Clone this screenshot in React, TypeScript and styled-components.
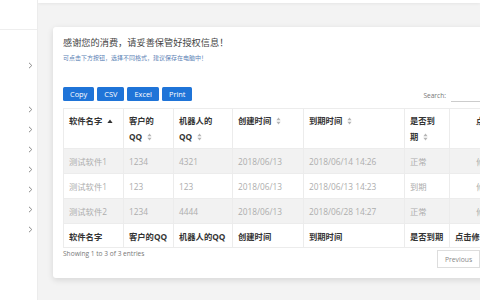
import styled, { createGlobalStyle } from "styled-components";

const GlobalStyle = createGlobalStyle`
    html, body {
        margin: 0;
        padding: 0;
        width: 480px;
        height: 300px;
        overflow: hidden;
        font-family: "Open Sans", "Noto Sans CJK SC", sans-serif;
    }
`;

type Column = {
    lines: string[];
    width: number;
    sort?: "asc" | "both";
    center?: boolean;
    footer: string;
};

const columns: Column[] = [
    { lines: ["软件名字"], width: 60, sort: "asc", footer: "软件名字" },
    { lines: ["客户的", "QQ"], width: 50, sort: "both", footer: "客户的QQ" },
    { lines: ["机器人的", "QQ"], width: 59, sort: "both", footer: "机器人的QQ" },
    { lines: ["创建时间"], width: 71, sort: "both", footer: "创建时间" },
    { lines: ["到期时间"], width: 101, sort: "both", footer: "到期时间" },
    { lines: ["是否到", "期"], width: 45, sort: "both", footer: "是否到期" },
    { lines: ["点击修改"], width: 70, center: true, footer: "点击修改" },
];

const rows = [
    ["测试软件1", "1234", "4321", "2018/06/13", "2018/06/14 14:26", "正常", "修改"],
    ["测试软件1", "123", "123", "2018/06/13", "2018/06/13 14:23", "到期", "修改"],
    ["测试软件2", "1234", "4444", "2018/06/13", "2018/06/28 14:27", "正常", "修改"],
];

// sidebar: true = has a chevron, "gap" = section spacer
const navItems: (boolean | "gap")[] = [true, "gap", true, true, true, true, true, true, true];

export default function App() {
    return (
        <>
            <GlobalStyle />
            <Page>
                <Sidebar>
                    <Logo />
                    <Nav>
                        {navItems.map((item, i) =>
                            item === "gap" ? (
                                <NavGap key={i} />
                            ) : (
                                <NavItem key={i}>
                                    <Chevron />
                                </NavItem>
                            )
                        )}
                    </Nav>
                </Sidebar>

                <Main>
                    <TopBar />
                    <Card>
                        <Title>感谢您的消费，请妥善保管好授权信息！</Title>
                        <Hint>可点击下方按钮，选择不同格式，建议保存在电脑中！</Hint>

                        <Toolbar>
                            <Buttons>
                                <ExportButton>Copy</ExportButton>
                                <ExportButton>CSV</ExportButton>
                                <ExportButton>Excel</ExportButton>
                                <ExportButton>Print</ExportButton>
                            </Buttons>
                            <SearchBox>
                                <label>Search:</label>
                                <input />
                            </SearchBox>
                        </Toolbar>

                        <Table>
                            <colgroup>
                                {columns.map((c, i) => (
                                    <col key={i} style={{ width: c.width }} />
                                ))}
                            </colgroup>
                            <thead>
                                <tr>
                                    {columns.map((c, i) => (
                                        <HeadCell key={i} $center={c.center}>
                                            {c.lines.map((line, j) => (
                                                <HeadLine key={j} $center={c.center}>
                                                    {line}
                                                    {j === c.lines.length - 1 && c.sort && <SortIcon dir={c.sort} />}
                                                </HeadLine>
                                            ))}
                                        </HeadCell>
                                    ))}
                                </tr>
                            </thead>
                            <tbody>
                                {rows.map((row, i) => (
                                    <BodyRow key={i} $striped={i % 2 === 0}>
                                        {row.map((value, j) => (
                                            <BodyCell key={j} $center={columns[j].center}>
                                                {value}
                                            </BodyCell>
                                        ))}
                                    </BodyRow>
                                ))}
                            </tbody>
                            <tfoot>
                                <tr>
                                    {columns.map((c, i) => (
                                        <FootCell key={i}>{c.footer}</FootCell>
                                    ))}
                                </tr>
                            </tfoot>
                        </Table>

                        <TableFooter>
                            <Info>Showing 1 to 3 of 3 entries</Info>
                            <Pagination>
                                <PageButton>Previous</PageButton>
                                <PageButton $active>1</PageButton>
                                <PageButton>Next</PageButton>
                            </Pagination>
                        </TableFooter>
                    </Card>
                </Main>
            </Page>
        </>
    );
}

function Chevron() {
    return (
        <svg width="5" height="7" viewBox="0 0 5 7">
            <polyline points="1,0.8 3.8,3.5 1,6.2" fill="none" stroke="#8a8a8a" strokeWidth="1" />
        </svg>
    );
}

function SortIcon({ dir }: { dir: "asc" | "both" }) {
    if (dir === "asc") {
        return (
            <SortWrap>
                <svg width="6" height="5" viewBox="0 0 6 5">
                    <polygon points="3,0.5 5.6,4 0.4,4" fill="#333" />
                </svg>
            </SortWrap>
        );
    }
    return (
        <SortWrap>
            <svg width="5" height="8" viewBox="0 0 5 8">
                <polygon points="2.5,0.5 4.6,3.2 0.4,3.2" fill="#b5b5b5" />
                <polygon points="2.5,7.5 4.6,4.8 0.4,4.8" fill="#b5b5b5" />
            </svg>
        </SortWrap>
    );
}

// Styled Components

const Page = styled.div`
    display: flex;
    width: 480px;
    height: 300px;
    overflow: hidden;
`;

const Sidebar = styled.div`
    width: 37px;
    flex-shrink: 0;
    background: #fff;
    border-right: 1px solid #ececec;
`;

const Logo = styled.div`
    height: 29px;
    border-bottom: 1px solid #eeeeee;
`;

const Nav = styled.div`
    display: flex;
    flex-direction: column;
    padding-top: 25px;
`;

const NavItem = styled.div`
    height: 20px;
    display: flex;
    align-items: center;
    justify-content: flex-end;
    padding-right: 4px;
`;

const NavGap = styled.div`
    height: 24px;
`;

const Main = styled.div`
    flex: 1;
    min-width: 0;
    background: #f3f3f3;
    overflow: hidden;
`;

const TopBar = styled.div`
    height: 3px;
    background: #fff;
    box-shadow: 0 1px 3px rgba(0, 0, 0, 0.06);
`;

const Card = styled.div`
    width: 486px;
    margin: 24px 0 0 15px;
    padding: 10px;
    box-sizing: border-box;
    background: #fff;
    border-radius: 3px;
    box-shadow: 0 2px 6px rgba(0, 0, 0, 0.12);
`;

const Title = styled.div`
    font-size: 9.2px;
    line-height: 12px;
    color: #444;
`;

const Hint = styled.div`
    margin-top: 5px;
    font-size: 6px;
    line-height: 8px;
    color: #5b82b5;
`;

const Toolbar = styled.div`
    display: flex;
    align-items: flex-end;
    justify-content: space-between;
    margin-top: 25px;
`;

const Buttons = styled.div`
    display: flex;
    gap: 3px;
`;

const ExportButton = styled.button`
    height: 14px;
    padding: 0 7px;
    border: none;
    border-radius: 1.5px;
    background: #1f74d8;
    color: #fff;
    font-family: "Open Sans", sans-serif;
    font-size: 7.4px;
    line-height: 14px;
`;

const SearchBox = styled.div`
    display: flex;
    align-items: center;
    gap: 5px;
    margin-bottom: -1px;

    label {
        font-size: 6.6px;
        color: #777;
    }

    input {
        width: 78px;
        height: 9px;
        margin-top: 3px;
        padding: 0;
        border: none;
        border-bottom: 1px solid #ccc;
        outline: none;
    }
`;

const Table = styled.table`
    margin-top: 7px;
    width: 456px;
    table-layout: fixed;
    border-collapse: collapse;
    font-size: 8.3px;
`;

const HeadCell = styled.th<{ $center?: boolean }>`
    height: 38px;
    box-sizing: border-box;
    padding: ${(p) => (p.$center ? "4px 0 3px 16px" : "4px 5px 3px")};
    vertical-align: top;
    border: 1px solid #ececec;
    font-weight: bold;
    color: #333;
    white-space: nowrap;
    overflow: hidden;
`;

const HeadLine = styled.div<{ $center?: boolean }>`
    line-height: 16px;
    display: flex;
    align-items: center;
    justify-content: ${(p) => (p.$center ? "center" : "flex-start")};
    gap: 5px;
`;

const SortWrap = styled.span`
    display: inline-flex;
    align-items: center;
`;

const BodyRow = styled.tr<{ $striped: boolean }>`
    height: 25px;
    background: ${(p) => (p.$striped ? "#f2f2f2" : "#fff")};
`;

const BodyCell = styled.td<{ $center?: boolean }>`
    padding: 0 5px;
    border: 1px solid #ececec;
    color: #adadad;
    text-align: ${(p) => (p.$center ? "center" : "left")};
    white-space: nowrap;
    overflow: hidden;
`;

const FootCell = styled.th`
    height: 23px;
    padding: 0 5px;
    border: 1px solid #ececec;
    text-align: left;
    font-weight: bold;
    color: #333;
    white-space: nowrap;
    overflow: hidden;
`;

const TableFooter = styled.div`
    display: flex;
    justify-content: space-between;
    align-items: flex-start;
    width: 466px;
    padding-top: 2px;
`;

const Info = styled.div`
    font-size: 6.6px;
    line-height: 8px;
    color: #777;
`;

const Pagination = styled.div`
    display: flex;
`;

const PageButton = styled.button<{ $active?: boolean }>`
    height: 18px;
    padding: 0 7px;
    border: 1px solid #ddd;
    margin-left: -1px;
    background: ${(p) => (p.$active ? "#1f74d8" : "#fff")};
    color: ${(p) => (p.$active ? "#fff" : "#888")};
    font-family: "Open Sans", sans-serif;
    font-size: 6.8px;
`;
